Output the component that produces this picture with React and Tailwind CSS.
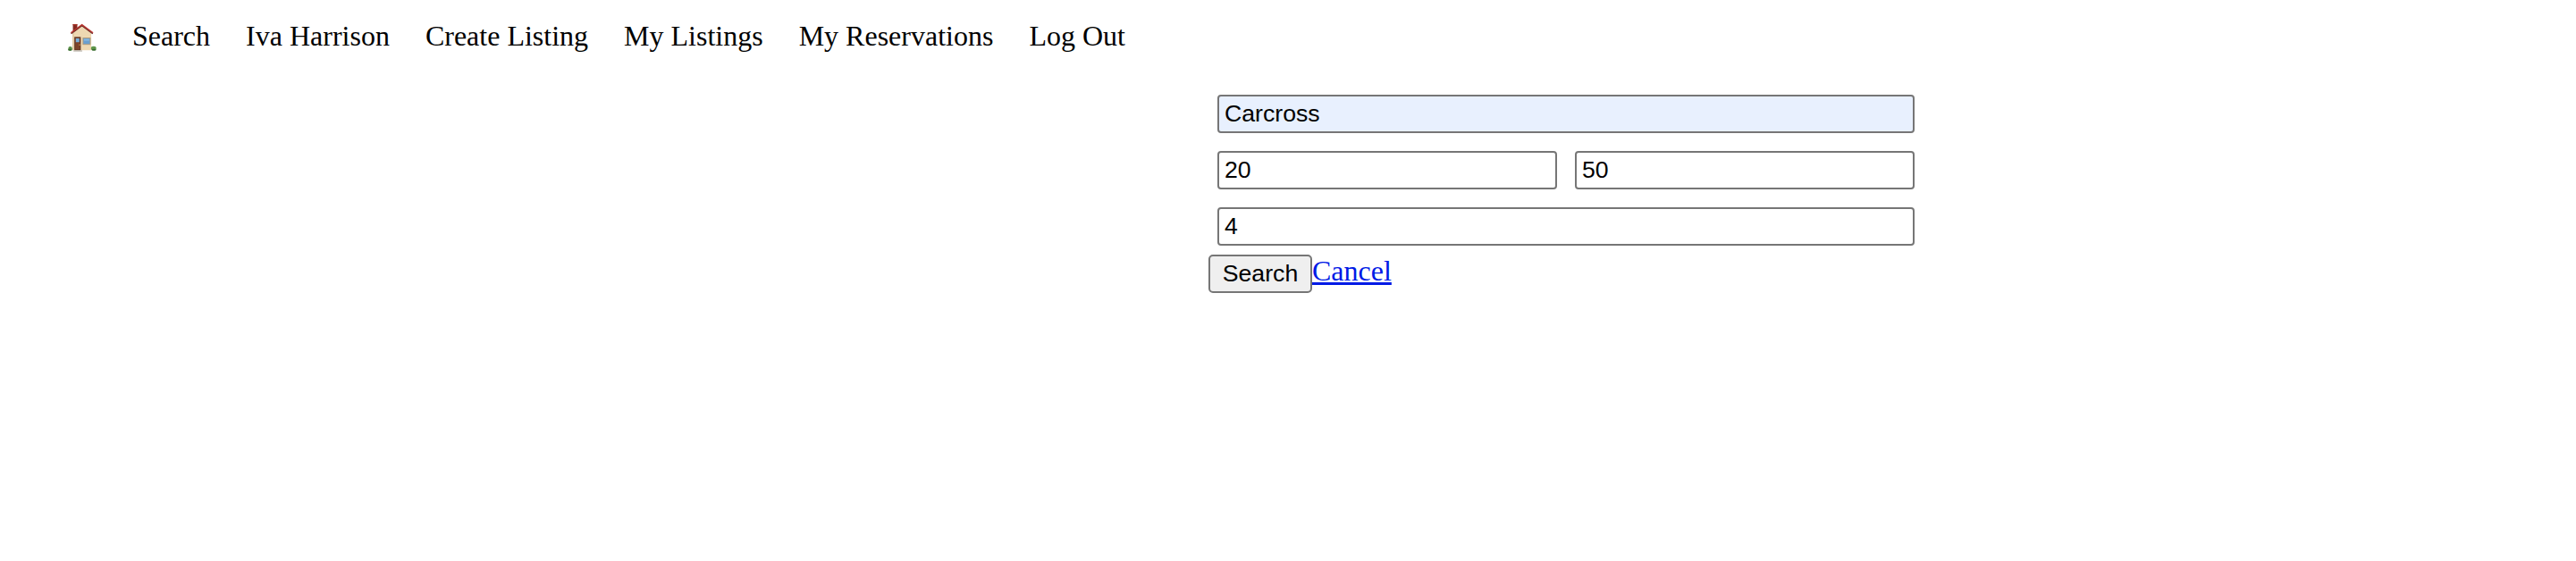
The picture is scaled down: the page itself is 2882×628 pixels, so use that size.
const links = ['Search', 'Iva Harrison', 'Create Listing', 'My Listings', 'My Reservations', 'Log Out'];

function House() {
  return (
    <svg className="mt-[4px] h-[32px] w-[32px] max-w-none" viewBox="31 30 98 98" role="img" aria-label="Home">
      <rect x="48" y="33" width="15" height="26" fill="#84291f" />
      <rect x="48" y="33" width="15" height="4" fill="#a83529" />
      <path d="M47 64 L79 38 L111 64 V123 H47 Z" fill="#eed8b2" />
      <path d="M47 64 L51 61 V123 H47 Z" fill="#dfc79e" />
      <path d="M42 66 L79 38 L116 66" fill="none" stroke="#662420" strokeWidth="4" />
      <path d="M41 63 L79 35 L117 63" fill="none" stroke="#b83630" strokeWidth="4" />
      <rect x="53" y="77" width="22" height="46" fill="#5f3220" />
      <rect x="56" y="80" width="16" height="40" fill="#7c432a" />
      <rect x="58" y="82" width="12" height="13" fill="#76b0dc" />
      <circle cx="71" cy="104" r="2" fill="#e5b64b" />
      <rect x="81" y="79" width="28" height="25" fill="#b39d7d" />
      <rect x="84" y="82" width="22" height="19" fill="#6a9fcf" />
      <rect x="86" y="84" width="18" height="6" fill="#86b8e0" />
      <rect x="50" y="123" width="30" height="4" fill="#bdb8af" />
      <ellipse cx="39" cy="117" rx="7" ry="7" fill="#5a9048" />
      <ellipse cx="38" cy="121" rx="7" ry="3" fill="#376b2e" />
      <ellipse cx="119" cy="116" rx="9" ry="7" fill="#5f964b" />
      <ellipse cx="120" cy="121" rx="8" ry="3" fill="#376b2e" />
    </svg>
  );
}

const field =
  "block h-[43px] w-full min-w-0 rounded-[4px] border-2 border-[#767676] px-[6px] pt-0 pb-[1px] font-['Liberation_Sans',Arial,sans-serif] text-[26.667px] leading-[30px] text-black outline-none";

export default function App() {
  return (
    <div className="min-h-[628px] bg-white font-['Liberation_Serif','Times_New_Roman',serif] text-[32px] leading-[36px] text-black">
      <nav className="flex h-[58px] gap-[40px] pt-[22px] pl-[76px]">
        <a href="#home" className="w-[32px]">
          <House />
        </a>
        {links.map((label) => (
          <a key={label} href="#page">
            {label}
          </a>
        ))}
      </nav>
      <form className="mt-[48px] ml-[1352px] w-[800px]">
        <div className="grid grid-cols-2 gap-[20px] px-[10px]">
          <div className="col-span-2">
            <input className={`${field} bg-[#e8f0fe]`} defaultValue="Carcross" />
          </div>
          <input className={`${field} bg-white`} defaultValue="20" />
          <input className={`${field} bg-white`} defaultValue="50" />
          <div className="col-span-2">
            <input className={`${field} bg-white`} defaultValue="4" />
          </div>
        </div>
        <div className="mt-[10px] flex items-start">
          <button
            type="button"
            className="h-[43px] w-[116px] rounded-[5px] border-2 border-[#767676] bg-[#efefef] pb-[1px] font-['Liberation_Sans',Arial,sans-serif] text-[26.667px] leading-[30px] text-black"
          >
            Search
          </button>
          <a
            href="#cancel"
            className="text-[#001ae6] underline decoration-[3px] underline-offset-[2px] [text-decoration-skip-ink:none]"
          >
            Cancel
          </a>
        </div>
      </form>
    </div>
  );
}
